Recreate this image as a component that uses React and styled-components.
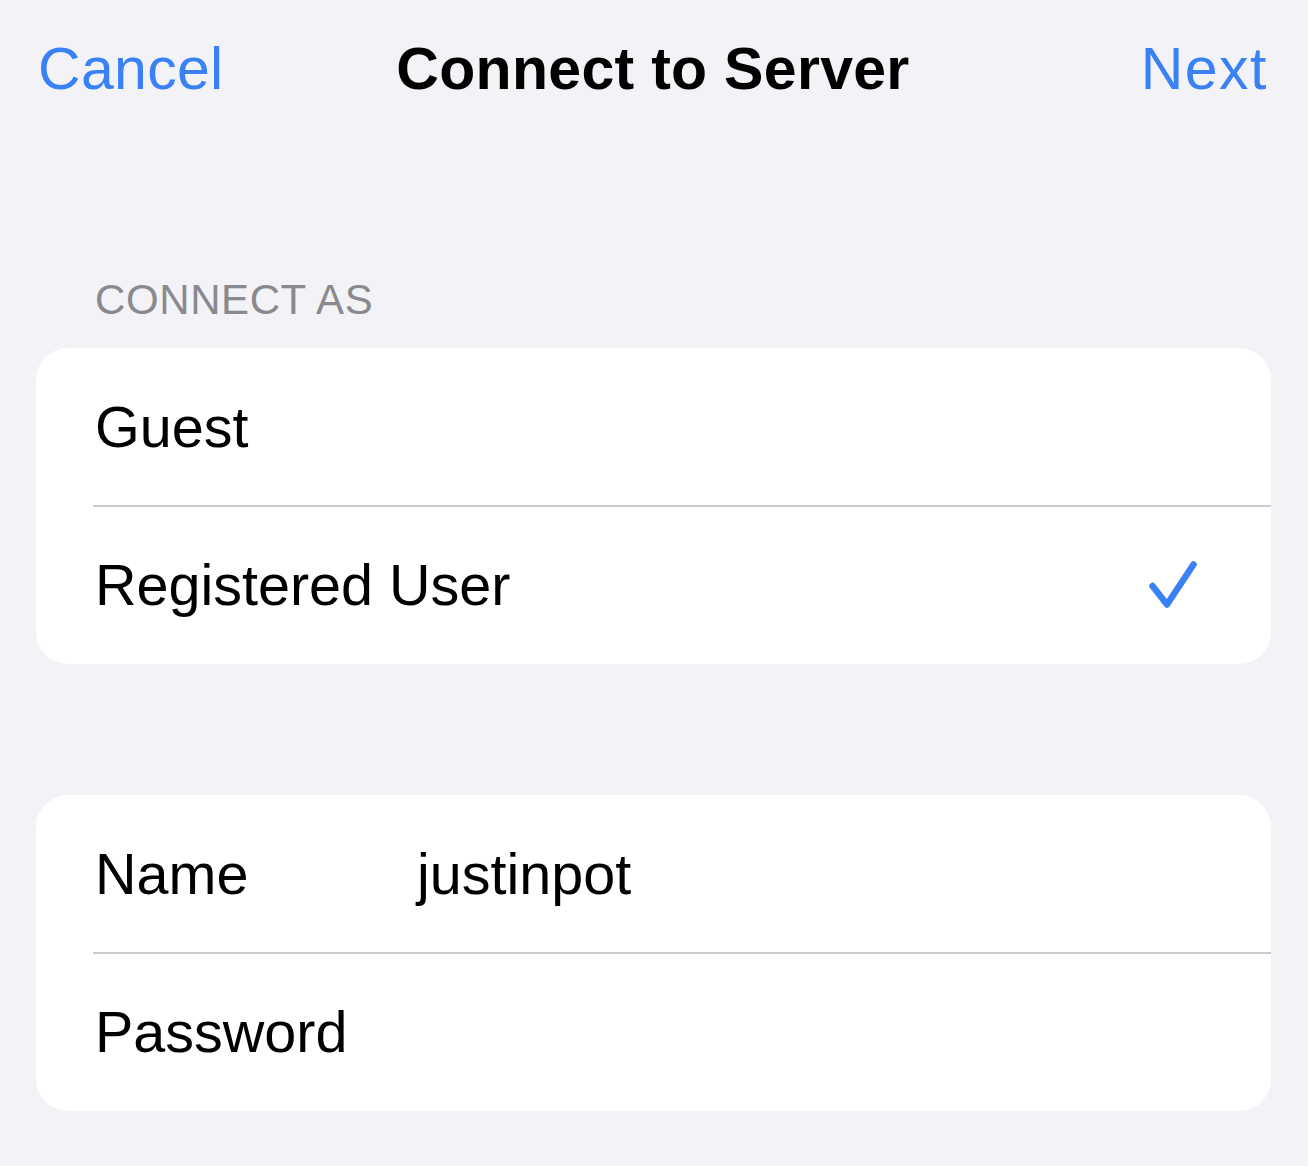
import React from "react";
import styled, { createGlobalStyle } from "styled-components";

const GlobalStyle = createGlobalStyle`
  html, body {
    margin: 0;
    padding: 0;
    background-color: #f2f2f7;
  }
  body {
    font-family: "Liberation Sans", Arial, sans-serif;
    -webkit-font-smoothing: antialiased;
  }
`;

const Page = styled.div`
  width: 1308px;
  height: 1166px;
  box-sizing: border-box;
  padding: 0 37px 0 36px;
  background-color: #f2f2f7;
  overflow: hidden;
`;

const NavBar = styled.header`
  display: grid;
  grid-template-columns: 1fr auto 1fr;
  align-items: center;
  padding: 40px 3px 0 2px;
  font-size: 59px;
  line-height: 59px;
`;

const NavButton = styled.div`
  color: #3a81f6;
  justify-self: ${props => (props.right ? "end" : "start")};
  letter-spacing: ${props => (props.right ? "1.5px" : "0.3px")};
  cursor: pointer;
`;

const NavTitle = styled.div`
  font-weight: 700;
  color: #000;
  letter-spacing: 0.3px;
`;

const SectionLabel = styled.div`
  margin-top: 180px;
  padding-left: 59px;
  font-size: 42px;
  line-height: 42px;
  letter-spacing: 0.6px;
  color: #8a8a8e;
  text-transform: uppercase;
`;

const Card = styled.div`
  margin-top: ${props => props.gap || 0}px;
  background-color: #fff;
  border-radius: 32px;
  overflow: hidden;
`;

const Row = styled.div`
  position: relative;
  display: flex;
  align-items: center;
  justify-content: space-between;
  height: 158px;
  padding: 0 74px 0 59px;
  font-size: 57.5px;
  line-height: 59px;
  color: #000;

  & + &::before {
    content: "";
    position: absolute;
    top: -1px;
    left: 57px;
    right: 0;
    height: 1.5px;
    background-color: #cbcbcf;
  }
`;

const FieldRow = styled(Row)`
  justify-content: flex-start;
`;

const FieldLabel = styled.span`
  width: 322px;
  flex-shrink: 0;
`;

const FieldValue = styled.span`
  color: #000;
`;

const Check = () => (
  <svg width="50" height="48" viewBox="0 0 50 48" fill="none">
    <path
      d="M5.5 25 L20 43.5 L46.5 3.5"
      stroke="#3a81f6"
      strokeWidth="6.5"
      strokeLinecap="round"
      strokeLinejoin="round"
    />
  </svg>
);

export default function App() {
  const options = [
    { label: "Guest", selected: false },
    { label: "Registered User", selected: true },
  ];

  return (
    <>
      <GlobalStyle />
      <Page>
        <NavBar>
          <NavButton>Cancel</NavButton>
          <NavTitle>Connect to Server</NavTitle>
          <NavButton right>Next</NavButton>
        </NavBar>

        <SectionLabel>Connect as</SectionLabel>
        <Card gap={27}>
          {options.map(opt => (
            <Row key={opt.label}>
              <span>{opt.label}</span>
              {opt.selected && <Check />}
            </Row>
          ))}
        </Card>

        <Card gap={131}>
          <FieldRow>
            <FieldLabel>Name</FieldLabel>
            <FieldValue>justinpot</FieldValue>
          </FieldRow>
          <FieldRow>
            <FieldLabel>Password</FieldLabel>
          </FieldRow>
        </Card>
      </Page>
    </>
  );
}
